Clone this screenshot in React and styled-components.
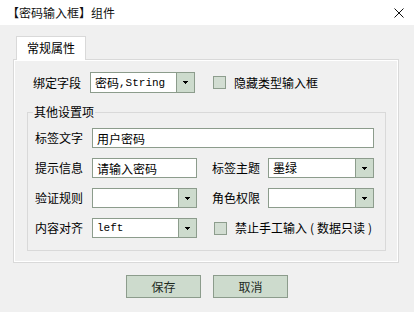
import React from 'react';
import styled, { createGlobalStyle } from 'styled-components';

const Global = createGlobalStyle`
  html, body { margin: 0; padding: 0; background: #f0f0f0; }
  body {
    font-family: "Noto Sans CJK SC", "Noto Sans", sans-serif;
    font-size: 12px;
    color: #000;
  }
  #root { width: 414px; height: 312px; }
`;

const Window = styled.div`
  width: 414px;
  height: 312px;
  background: #f0f0f0;
  display: flex;
  flex-direction: column;
  overflow: hidden;
`;

const TitleBar = styled.div`
  height: 25px;
  flex: none;
  background: #fff;
  display: flex;
  align-items: center;
  justify-content: space-between;
  padding: 0 10px 0 7px;
  box-sizing: border-box;
`;

const Title = styled.span`
  font-size: 12px;
  line-height: 14px;
  color: #111;
`;

const CloseButton = styled.span`
  width: 10px;
  height: 10px;
  display: flex;
  margin-top: 1px;
`;

const Body = styled.div`
  padding-top: 11px;
  display: flex;
  flex-direction: column;
`;

const TabStrip = styled.div`
  display: flex;
  padding-left: 16px;
`;

const Tab = styled.div`
  position: relative;
  z-index: 1;
  width: 70px;
  height: 24px;
  margin-bottom: -1px;
  box-sizing: border-box;
  border: 1px solid #d9d9d9;
  border-bottom: none;
  background: #fff;
  display: flex;
  align-items: center;
  justify-content: center;
  padding-bottom: 1px;
  line-height: 14px;
`;

const Panel = styled.div`
  margin-left: 13px;
  width: 386px;
  box-sizing: border-box;
  border: 1px solid #d9d9d9;
  box-shadow: inset 0 0 0 1px #fff;
  padding: 12px 12px 11px 13px;
  display: flex;
  flex-direction: column;
`;

const TopRow = styled.div`
  display: flex;
  align-items: center;
  height: 21px;
  padding-left: 6px;
`;

const GroupBox = styled.fieldset`
  margin: 12px 0 0 0;
  border: 1px solid #d9d9d9;
  padding: 9px 0 12px 7px;
  min-width: 0;
  display: flex;
  flex-direction: column;
  gap: 10px;
`;

const Legend = styled.legend`
  margin-left: -2px;
  padding: 0 1px;
  line-height: 14px;
  font-size: 12px;
`;

const FormRow = styled.div`
  display: flex;
  align-items: center;
  height: 20px;
`;

const Pair = styled.div`
  display: flex;
  align-items: center;
  margin-left: ${p => p.$offset || 0}px;
`;

const Label = styled.span`
  flex: none;
  width: ${p => p.$w || 57}px;
  line-height: 14px;
  white-space: nowrap;
`;

const TextBox = styled.input`
  flex: none;
  width: ${p => p.$w}px;
  height: 20px;
  box-sizing: border-box;
  border: 1px solid #8c9c8c;
  background: #fff;
  padding: 0 4px;
  margin: 0;
  font-family: "Noto Sans CJK SC", sans-serif;
  font-size: 12px;
  color: #000;
  outline: none;
`;

const Select = styled.div`
  flex: none;
  width: ${p => p.$w}px;
  height: ${p => p.$h || 20}px;
  box-sizing: border-box;
  border: 1px solid #8c9c8c;
  background: #fff;
  display: flex;
`;

const SelectValue = styled.span`
  flex: 1;
  min-width: 0;
  padding-left: 4px;
  display: flex;
  align-items: center;
  line-height: 14px;
  white-space: nowrap;
  overflow: hidden;
`;

const Mono = styled.span`
  font-family: "Liberation Mono", monospace;
  font-size: 11px;
`;

const DropButton = styled.span`
  flex: none;
  width: 17px;
  border-left: 1px solid #8c9c8c;
  background: #cddbcd;
  display: flex;
  align-items: center;
  justify-content: center;
`;

const CheckBox = styled.span`
  flex: none;
  width: 13px;
  height: 13px;
  box-sizing: border-box;
  border: 1px solid #8d9d8d;
  background: #d2ddd2;
  margin-left: ${p => p.$offset || 0}px;
`;

const CheckText = styled.span`
  margin-left: 8px;
  line-height: 14px;
  white-space: nowrap;
`;

const Paren = styled.span`
  padding: 0 3px;
`;

const Footer = styled.div`
  display: flex;
  justify-content: center;
  gap: 12px;
  margin-top: 12px;
`;

const Button = styled.button`
  width: 75px;
  height: 23px;
  box-sizing: border-box;
  border: 1px solid #8c9c8c;
  background: #cddbcd;
  font-family: "Noto Sans CJK SC", sans-serif;
  font-size: 12px;
  line-height: 14px;
  color: #1e2a1e;
  padding: 0;
  margin: 0;
`;

const Arrow = () => (
  <svg width="5" height="3" viewBox="0 0 5 3" shapeRendering="crispEdges">
    <path d="M0 0h5v1H0z M1 1h3v1H1z M2 2h1v1H2z" fill="#000" />
  </svg>
);

const Combo = ({ w, h, children }) => (
  <Select $w={w} $h={h}>
    <SelectValue>{children}</SelectValue>
    <DropButton><Arrow /></DropButton>
  </Select>
);

export default function App() {
  return (
    <>
      <Global />
      <Window>
        <TitleBar>
          <Title>【密码输入框】组件</Title>
          <CloseButton>
            <svg width="10" height="10" viewBox="0 0 10 10">
              <path d="M0.5 0.5L9.5 9.5M9.5 0.5L0.5 9.5" stroke="#111" strokeWidth="1" />
            </svg>
          </CloseButton>
        </TitleBar>
        <Body>
          <TabStrip>
            <Tab>常规属性</Tab>
          </TabStrip>
          <Panel>
            <TopRow>
              <Label>绑定字段</Label>
              <Combo w={105} h={21}>密码<Mono>,String</Mono></Combo>
              <CheckBox $offset={18} />
              <CheckText>隐藏类型输入框</CheckText>
            </TopRow>
            <GroupBox>
              <Legend>其他设置项</Legend>
              <FormRow>
                <Label>标签文字</Label>
                <TextBox $w={282} defaultValue="用户密码" readOnly />
              </FormRow>
              <FormRow>
                <Pair>
                  <Label>提示信息</Label>
                  <TextBox $w={105} defaultValue="请输入密码" readOnly />
                </Pair>
                <Pair $offset={15}>
                  <Label $w={56}>标签主题</Label>
                  <Combo w={106}>墨绿</Combo>
                </Pair>
              </FormRow>
              <FormRow>
                <Pair>
                  <Label>验证规则</Label>
                  <Combo w={105} />
                </Pair>
                <Pair $offset={15}>
                  <Label $w={56}>角色权限</Label>
                  <Combo w={106} />
                </Pair>
              </FormRow>
              <FormRow>
                <Pair>
                  <Label>内容对齐</Label>
                  <Combo w={105}><Mono>left</Mono></Combo>
                </Pair>
                <Pair $offset={15}>
                  <CheckBox $offset={2} />
                  <CheckText>禁止手工输入<Paren>(</Paren>数据只读<Paren>)</Paren></CheckText>
                </Pair>
              </FormRow>
            </GroupBox>
          </Panel>
          <Footer>
            <Button>保存</Button>
            <Button>取消</Button>
          </Footer>
        </Body>
      </Window>
    </>
  );
}
